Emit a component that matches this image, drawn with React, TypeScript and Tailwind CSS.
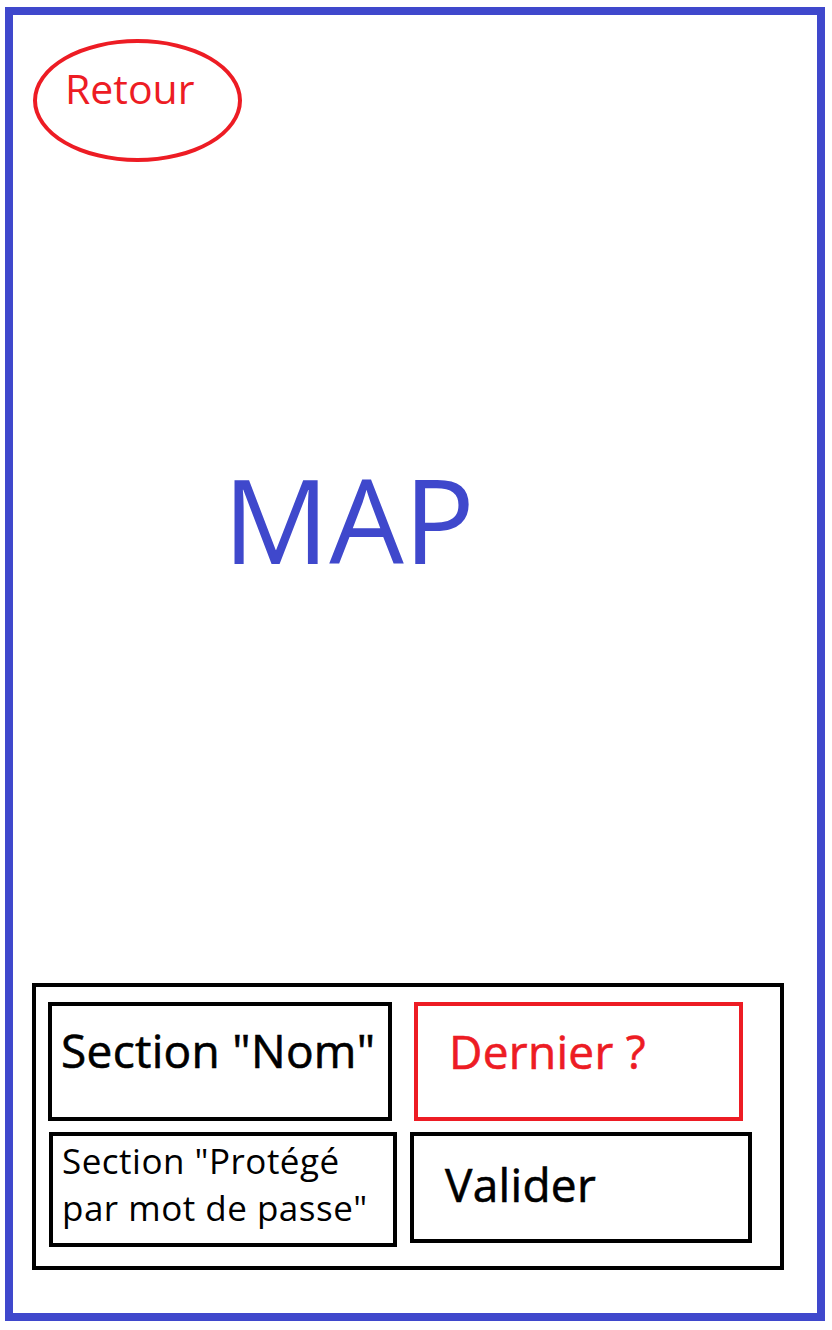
export default function App() {
  return (
    <main className="w-[832px] h-[1330px] bg-white pt-[7px] pl-[5px] font-['Open_Sans',sans-serif]">
      <div className="w-[820px] h-[1314px] border-[8px] border-[#3f48cc] flex flex-col">
        {/* back button */}
        <div className="ml-[20px] mt-[24px] w-[209px] h-[123px] rounded-[50%] border-[4px] border-[#ed1c24] pl-[28px] pt-[25px]">
          <span className="text-[41px] leading-none text-[#ed1c24]">Retour</span>
        </div>

        {/* map placeholder */}
        <div className="ml-[210px] mt-[298px] text-[118px] leading-none text-[#3f48cc]">MAP</div>

        {/* bottom panel */}
        <div className="mt-auto mb-[43px] ml-[19px] w-[752px] h-[287px] border-[4px] border-black">
          <div className="flex pt-[15px] pl-[12px]">
            <div className="w-[344px] h-[119px] border-[4px] border-black pl-[9px] pt-[21px] text-[46px] tracking-[0.3px] leading-none text-black [-webkit-text-stroke:0.6px_black]">
              Section "Nom"
            </div>
            <div className="ml-[22px] w-[329px] h-[119px] border-[4px] border-[#ed1c24] pl-[31px] pt-[22px] text-[46px] tracking-[0.3px] leading-none text-[#ed1c24] [-webkit-text-stroke:0.6px_#ed1c24]">
              Dernier ?
            </div>
          </div>
          <div className="flex mt-[11px] pl-[13px]">
            <div className="w-[348px] h-[115px] border-[4px] border-black pl-[9px] pt-[1px] text-[35px] tracking-[0.5px] leading-[47px] text-black">
              Section "Protégé
              <br />
              par mot de passe"
            </div>
            <div className="ml-[13px] w-[342px] h-[111px] border-[4px] border-black pl-[31px] pt-[25px] text-[46px] tracking-[0.3px] leading-none text-black [-webkit-text-stroke:0.6px_black]">
              Valider
            </div>
          </div>
        </div>
      </div>
    </main>
  )
}
